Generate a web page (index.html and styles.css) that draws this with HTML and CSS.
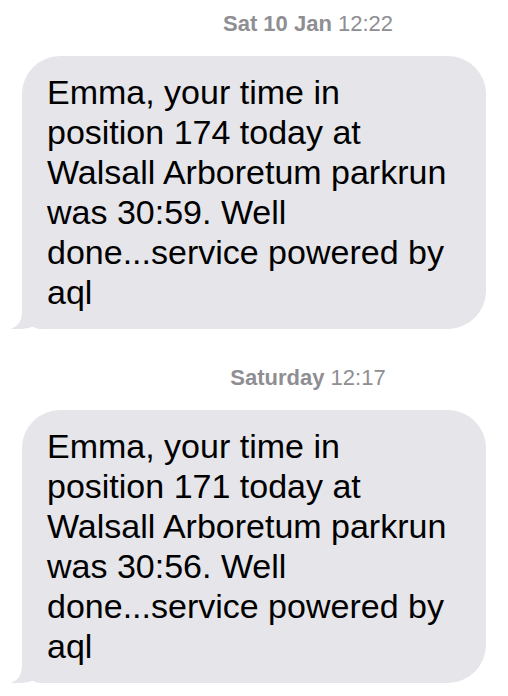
FILE: index.html
```html
<!DOCTYPE html>
<html lang="en">
<head>
  <meta charset="UTF-8" />
  <meta name="viewport" content="width=device-width, initial-scale=1.0"/>
  <title>Messages</title>
  <link rel="stylesheet" href="styles.css">
</head>
<body>

<div class="thread">
  <div class="stamp"><b>Sat 10 Jan</b> 12:22</div>
  <div class="bubble">
    Emma, your time in position 174 today at Walsall Arboretum parkrun was 30:59. Well done...service powered by aql
    <svg class="tail" width="40" height="24" viewBox="0 0 40 24">
      <path d="M12 0 L12 7 Q12 20 1 24 Q14 25 25 21 Q30 24 40 24 L40 0 Z" fill="#e5e5ea"/>
    </svg>
  </div>

  <div class="stamp"><b>Saturday</b> 12:17</div>
  <div class="bubble">
    Emma, your time in position 171 today at Walsall Arboretum parkrun was 30:56. Well done...service powered by aql
    <svg class="tail" width="40" height="24" viewBox="0 0 40 24">
      <path d="M12 0 L12 7 Q12 20 1 24 Q14 25 25 21 Q30 24 40 24 L40 0 Z" fill="#e5e5ea"/>
    </svg>
  </div>
</div>

</body>
</html>
```

FILE: styles.css
```css
body {
  margin: 0;
  background-color: #fff;
  font-family: 'Liberation Sans', Arial, sans-serif;
}

.thread {
  display: flex;
  flex-direction: column;
  padding-top: 11px;
}

.stamp {
  padding-left: 108px;
  text-align: center;
  font-size: 22px;
  line-height: 26px;
  color: #8e8e93;
}

.stamp b {
  font-weight: bold;
}

.stamp + .bubble {
  margin-top: 19px;
}

.bubble + .stamp {
  margin-top: 36px;
}

.bubble {
  position: relative;
  margin-left: 22px;
  width: 464px;
  box-sizing: border-box;
  padding: 16px 29px 17px 25px;
  background-color: #e5e5ea;
  border-radius: 38px;
  border-bottom-left-radius: 20px;
  color: #000;
  font-size: 34px;
  line-height: 40px;
}

.tail {
  position: absolute;
  left: -12px;
  bottom: 0;
  display: block;
}
```
